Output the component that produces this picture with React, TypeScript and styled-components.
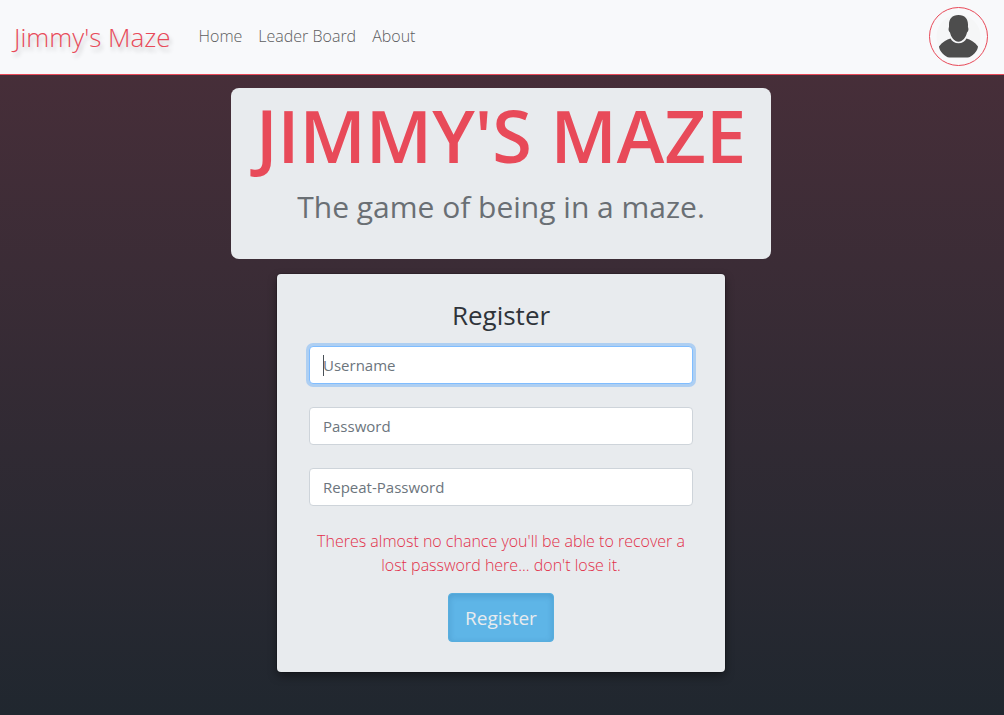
import React from "react";
import styled, { createGlobalStyle } from "styled-components";

const red = "#e84a59";
const panel = "#e8ebee";

const GlobalStyle = createGlobalStyle`
  *, *::before, *::after { box-sizing: border-box; }
  html { min-height: 100%; background: #20262f; }
  body {
    margin: 0;
    min-height: 100vh;
    font-family: "Segoe UI", "Open Sans", "Noto Sans", sans-serif;
    font-size: 15px;
    line-height: 24px;
    color: #2f343a;
    background: linear-gradient(180deg, #4b2f3a 0%, #20272f 100%);
  }
`;

const Navbar = styled.nav`
  display: flex;
  align-items: center;
  padding: 7px 16px 8px 14px;
  background: #f8f9fb;
  border-bottom: 1px solid ${red};
`;

const Brand = styled.a`
  margin-right: 20px;
  font-size: 26px;
  font-weight: 300;
  line-height: 40px;
  color: ${red};
  text-decoration: none;
  text-shadow: 2px 4px 4px rgba(0, 0, 0, 0.2);
`;

const NavList = styled.ul`
  display: flex;
  flex: 1;
  margin: 0;
  padding: 0;
  list-style: none;
`;

const NavLink = styled.a`
  display: block;
  padding: 7px 8px 9px;
  font-size: 16px;
  font-weight: 300;
  color: #5c5d60;
  text-decoration: none;
`;

const Avatar = styled.a`
  display: block;
  width: 59px;
  height: 59px;
  border: 1px solid ${red};
  border-radius: 50%;
  overflow: hidden;

  svg { display: block; width: 100%; height: 100%; }
`;

const Main = styled.main`
  display: flex;
  flex-direction: column;
  align-items: center;
  gap: 15px;
  padding: 13px 2px 40px 0;
  text-align: center;
`;

const Hero = styled.header`
  width: 100%;
  max-width: 540px;
  padding: 8px 16px 28px;
  border-radius: 8px;
  background: ${panel};
`;

const Title = styled.h1`
  margin: 0 0 8px;
  font-size: 72px;
  font-weight: 600;
  line-height: 79px;
  color: ${red};
  white-space: nowrap;
`;

const Tagline = styled.p`
  margin: 0;
  font-size: 30px;
  line-height: 48px;
  color: #6a6f74;
`;

const Card = styled.form`
  width: 100%;
  max-width: 448px;
  padding: 24px 32px 30px;
  border-radius: 4px;
  background: ${panel};
  box-shadow: 0 0 0 1px rgba(0, 0, 0, 0.15), 0 4px 10px rgba(0, 0, 0, 0.4);
`;

const Heading = styled.h2`
  margin: 0 0 14px;
  font-size: 26px;
  font-weight: 400;
  line-height: 34px;
`;

const Field = styled.input`
  display: block;
  width: 100%;
  height: 38px;
  margin-bottom: 23px;
  padding: 6px 13px;
  border: 1px solid #ced4da;
  border-radius: 4px;
  background: #fff;
  font: inherit;
  color: #495057;

  &::placeholder { color: #6c757d; opacity: 1; }

  &:focus {
    outline: 0;
    border-color: #80bdff;
    box-shadow: 0 0 0 3px rgba(0, 123, 255, 0.25);
  }

  /* steady caret while the focused field is empty */
  &:focus:placeholder-shown {
    caret-color: transparent;
    background: linear-gradient(#495057, #495057) 13px 8px / 1px 21px no-repeat #fff;
  }
`;

const Warning = styled.p`
  margin: 0 0 16px;
  font-size: 16px;
  font-weight: 300;
  color: #e2304a;
`;

const Submit = styled.button`
  height: 49px;
  padding: 8px 16px;
  border: 1px solid #58aede;
  border-radius: 4px;
  background: #5eb5e7;
  box-shadow: inset 0 2px 6px rgba(0, 60, 110, 0.18);
  font: inherit;
  font-size: 19px;
  line-height: 30px;
  color: ${panel};
`;

const links = ["Home", "Leader Board", "About"];

const fields = [
  { name: "Username", type: "text" },
  { name: "Password", type: "password" },
  { name: "Repeat-Password", type: "password" },
];

export default function App() {
  return (
    <>
      <GlobalStyle />
      <Navbar>
        <Brand href="#">Jimmy's Maze</Brand>
        <NavList>
          {links.map((label) => (
            <li key={label}>
              <NavLink href="#">{label}</NavLink>
            </li>
          ))}
        </NavList>
        <Avatar href="#" aria-label="Profile">
          <svg viewBox="0 0 57 57" aria-hidden="true">
            <circle cx="28.500" cy="28.500" r="22" fill="#f5f6f7" />
            <path
              d="M9 38.500C12 34 17 31.500 20.500 30.500C22 33.500 25 35.300 28.500 35.300S35 33.500 36.500 30.500C40 31.500 45 34 48 38.500C48 42.500 42 49.500 37.500 49.500H19.500C15 49.500 9 42.500 9 38.500Z"
              fill="#4d4d4d"
            />
            <path
              d="M28.500 7C35 7 38 11 38 16.500C38 18.500 37.800 19 38.300 20C38.800 21.800 38 24 37 24.500C36 29.500 32.500 33.700 28.500 33.700S21 29.500 20 24.500C19 24 18.200 21.800 18.700 20C19.200 19 19 18.500 19 16.500C19 11 22 7 28.500 7Z"
              fill="#4d4d4d"
            />
          </svg>
        </Avatar>
      </Navbar>
      <Main>
        <Hero>
          <Title>JIMMY'S MAZE</Title>
          <Tagline>The game of being in a maze.</Tagline>
        </Hero>
        <Card onSubmit={(event) => event.preventDefault()}>
          <Heading>Register</Heading>
          {fields.map(({ name, type }, index) => (
            <Field
              key={name}
              type={type}
              name={name}
              placeholder={name}
              aria-label={name}
              autoFocus={index === 0}
            />
          ))}
          <Warning>
            Theres almost no chance you'll be able to recover a lost password
            here... don't lose it.
          </Warning>
          <Submit type="submit">Register</Submit>
        </Card>
      </Main>
    </>
  );
}
